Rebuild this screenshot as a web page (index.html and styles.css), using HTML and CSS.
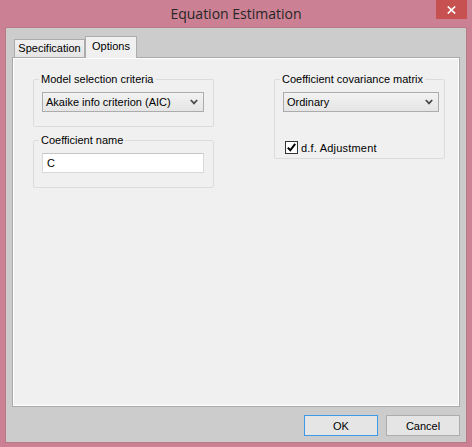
FILE: index.html
```html
<!DOCTYPE html>
<html>
<head>
<meta charset="utf-8">
<link rel="stylesheet" href="styles.css">
</head>
<body>
<div class="window">
  <div class="titlebar">
    <span class="title">Equation Estimation</span>
    <div class="close">
      <svg width="9" height="8" viewBox="0 0 9 8"><path d="M0.8 0.5 L8.2 7.5 M8.2 0.5 L0.8 7.5" stroke="#fff" stroke-width="1.7" fill="none"/></svg>
    </div>
  </div>
  <div class="client">
    <div class="tabs">
      <div class="tab">Specification</div>
      <div class="tab active">Options</div>
    </div>
    <div class="panel">
      <div class="col col-left">
        <fieldset class="group g-model">
          <legend>Model selection criteria</legend>
          <div class="select">
            <span>Akaike info criterion (AIC)</span>
            <svg class="chev" width="8" height="6" viewBox="0 0 8 6"><path d="M0.8 1 L4 4.4 L7.2 1" stroke="#4a4a4a" stroke-width="1.8" fill="none"/></svg>
          </div>
        </fieldset>
        <fieldset class="group g-name">
          <legend>Coefficient name</legend>
          <div class="input">C</div>
        </fieldset>
      </div>
      <div class="col col-right">
        <fieldset class="group g-cov">
          <legend>Coefficient covariance matrix</legend>
          <div class="select">
            <span>Ordinary</span>
            <svg class="chev" width="8" height="6" viewBox="0 0 8 6"><path d="M0.8 1 L4 4.4 L7.2 1" stroke="#4a4a4a" stroke-width="1.8" fill="none"/></svg>
          </div>
          <div class="check">
            <span class="box">
              <svg width="11" height="11" viewBox="0 0 11 11"><path d="M1.8 5.6 L4.3 8.3 L9.2 1.8" stroke="#000" stroke-width="2" fill="none"/></svg>
            </span>
            <span class="check-label">d.f. Adjustment</span>
          </div>
        </fieldset>
      </div>
    </div>
    <div class="footer">
      <button class="btn btn-default">OK</button>
      <button class="btn">Cancel</button>
    </div>
  </div>
</div>
</body>
</html>
```

FILE: styles.css
```css
html, body {
  margin: 0;
  padding: 0;
}

body {
  width: 472px;
  height: 447px;
  background: #cc8093;
  overflow: hidden;
  font-family: "Liberation Sans", Arial, sans-serif;
  font-size: 11px;
  color: #000;
}

.window {
  display: flex;
  flex-direction: column;
  height: 447px;
}

.titlebar {
  height: 27px;
  display: grid;
  grid-template-columns: 1fr auto 1fr;
  align-items: start;
}

.title {
  grid-column: 2;
  font-family: "Open Sans", "Noto Sans", sans-serif;
  font-size: 14px;
  line-height: 27px;
  color: #262626;
}

.close {
  grid-column: 3;
  justify-self: end;
  width: 31px;
  height: 19px;
  margin-right: 5px;
  background: #c75050;
  display: flex;
  align-items: center;
  justify-content: center;
}

.client {
  flex: 1;
  margin: 0 5px 4px 5px;
  border: 1px solid #b87a89;
  background: #cccccc;
  display: flex;
  flex-direction: column;
}

.tabs {
  display: flex;
  align-items: flex-end;
  height: 21px;
  margin-top: 8px;
  padding-left: 8px;
}

.tab {
  box-sizing: border-box;
  height: 18px;
  width: 71px;
  border: 1px solid #acacac;
  border-bottom: none;
  background: linear-gradient(#f0f0f0, #e5e5e5);
  text-align: center;
  line-height: 17px;
}

.tab.active {
  width: 52px;
  height: 22px;
  margin-bottom: -1px;
  background: #f0f0f0;
  line-height: 19px;
  position: relative;
  z-index: 1;
}

.panel {
  flex: 1;
  margin: 0 6px;
  border: 1px solid #a9a9a9;
  box-shadow: inset 1px 1px 0 #fff, inset -1px -1px 0 #fff;
  background: #f0f0f0;
  display: flex;
  gap: 60px;
  padding: 14px 0 0 20px;
}

.col {
  display: flex;
  flex-direction: column;
}

.group {
  box-sizing: border-box;
  margin: 0;
  min-width: 0;
  border: 1px solid #dcdcdc;
  border-radius: 2px;
  padding: 6px 9px 14px 8px;
}

.group legend {
  padding: 0 2px;
  margin-left: -3px;
  line-height: 14px;
}

.g-model, .g-name {
  width: 181px;
}

.g-name {
  margin-top: 6px;
}

.g-cov {
  width: 171px;
  padding: 6px 5px 4px 8px;
}

.select {
  box-sizing: border-box;
  height: 20px;
  border: 1px solid #acacac;
  background: linear-gradient(#f2f2f2, #e5e5e5);
  display: flex;
  align-items: center;
  justify-content: space-between;
  padding: 0 5px 0 3px;
}

.chev {
  display: block;
}

.input {
  box-sizing: border-box;
  height: 20px;
  border: 1px solid #d9d9d9;
  border-top-color: #c6c6c6;
  background: #fff;
  padding-left: 4px;
  line-height: 18px;
}

.check {
  display: flex;
  align-items: center;
  gap: 3px;
  margin-top: 29px;
  margin-left: 2px;
  height: 13px;
}

.box {
  box-sizing: border-box;
  width: 13px;
  height: 13px;
  border: 1px solid #333;
  background: #fff;
  display: flex;
  align-items: center;
  justify-content: center;
}

.box svg {
  display: block;
}

.check-label {
  letter-spacing: 0.2px;
}

.footer {
  display: flex;
  justify-content: flex-end;
  gap: 8px;
  padding: 8px 6px 6px 0;
}

.btn {
  box-sizing: border-box;
  width: 74px;
  height: 21px;
  margin: 0;
  padding: 0;
  border: 1px solid #adadad;
  background: #e5e5e5;
  font-family: "Liberation Sans", Arial, sans-serif;
  font-size: 11px;
  color: #000;
}

.btn-default {
  border-color: #3c9ae8;
}
```
